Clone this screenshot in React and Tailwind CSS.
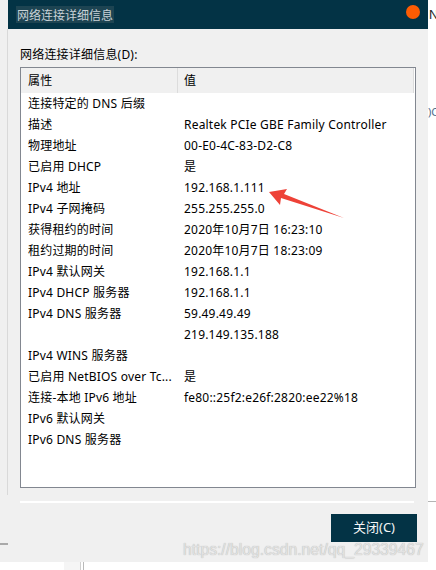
import React from "react";

const rows = [
  ["连接特定的 DNS 后缀", ""],
  ["描述", "Realtek PCIe GBE Family Controller"],
  ["物理地址", "00-E0-4C-83-D2-C8"],
  ["已启用 DHCP", "是"],
  ["IPv4 地址", "192.168.1.111"],
  ["IPv4 子网掩码", "255.255.255.0"],
  ["获得租约的时间", "2020年10月7日 16:23:10"],
  ["租约过期的时间", "2020年10月7日 18:23:09"],
  ["IPv4 默认网关", "192.168.1.1"],
  ["IPv4 DHCP 服务器", "192.168.1.1"],
  ["IPv4 DNS 服务器", "59.49.49.49"],
  ["", "219.149.135.188"],
  ["IPv4 WINS 服务器", ""],
  ["已启用 NetBIOS over Tc...", "是"],
  ["连接-本地 IPv6 地址", "fe80::25f2:e26f:2820:ee22%18"],
  ["IPv6 默认网关", ""],
  ["IPv6 DNS 服务器", ""],
];

const App = () => {
  return (
    <div className="relative w-[436px] h-[570px] overflow-hidden bg-white flex flex-col font-['Noto_Sans','Noto_Sans_CJK_SC',sans-serif] text-black">
      <div className="flex h-[562px]">
        {/* left strip of the window behind */}
        <div className="w-[8px] bg-[#f0f0f0] flex flex-col">
          <div className="h-[29px]" />
          <div className="h-[466px] w-[1px] ml-[7px] bg-[#d9d9d9]" />
          <div className="h-[48px]" />
          <div className="h-[2px] bg-[#a9a9a9]" />
        </div>

        {/* dialog */}
        <div className="w-[420px] flex flex-col bg-[#f0f0f0]">
          <div className="h-[29px] bg-[#033345] flex pl-[8px]">
            <span className="mt-[6px] h-[17px] px-[1px] bg-[#1d4452] text-[#c8d2d7] text-[12px] leading-[17px] font-['Noto_Sans_CJK_SC',sans-serif]">
              网络连接详细信息
            </span>
            <div className="ml-auto mr-[8px] mt-[5px] w-[14px] h-[14px] rounded-full bg-[#fd5c03]" />
          </div>

          <div className="flex-1 pl-[12px] pr-[11px] pt-[18px] flex flex-col">
            <div className="h-[16px] text-[12px] leading-[16px] tracking-[0.2px]">网络连接详细信息(D):</div>

            <div className="mt-[4px] w-[396px] h-[421px] border border-[#828790] bg-white flex flex-col text-[12px] tracking-[0.2px]">
              <div className="h-[25px] flex shrink-0">
                <div className="w-[156px] bg-[#f0f0f0] pl-[7px] flex items-center">属性</div>
                <div className="w-[1px] bg-[#dcdcdc]" />
                <div className="w-[235px] bg-[#f0f0f0] pl-[6px] flex items-center">值</div>
                <div className="w-[1px] bg-[#dcdcdc]" />
              </div>
              {rows.map(([k, v], i) => (
                <div key={i} className="h-[21px] flex items-center shrink-0">
                  <div className="w-[156px] pl-[7px] whitespace-nowrap overflow-hidden">{k}</div>
                  <div className="pl-[7px] whitespace-nowrap">{v}</div>
                </div>
              ))}
            </div>

            <div className="mt-[13px] w-[394px] h-[2px] bg-white" />

            <div className="mt-[11px] flex justify-end">
              <button className="w-[86px] h-[28px] bg-[#033345] text-[#f2f5f6] text-[13px] flex items-center justify-center">
                关闭(C)
              </button>
            </div>
          </div>
        </div>

        {/* right strip of the window behind */}
        <div className="w-[8px] bg-white flex flex-col overflow-hidden">
          <div className="h-[29px] pt-[7px] pl-[1px] text-[13px] leading-[16px] text-[#222] font-['Liberation_Sans',sans-serif]">
            N
          </div>
          <div className="mt-[76px] h-[14px] text-[11px] leading-[14px] text-[#4d6c8c] whitespace-nowrap">)C</div>
          <div className="mt-[382px] h-[1px] bg-[#b4b4b4]" />
        </div>
      </div>

      {/* bottom strip */}
      <div className="h-[8px] flex">
        <div className="w-[64px]" />
        <div className="w-[16px] bg-[#f5f5f5]" />
        <div className="w-[1px] bg-[#cfcfcf]" />
        <div className="w-[2px]" />
        <div className="w-[1px] bg-[#b9b9b9]" />
      </div>

      {/* watermark */}
      <div className="absolute left-[183px] top-[540px] text-[15.7px] leading-[20px] text-[#e2e2e2] font-['Liberation_Sans',sans-serif] whitespace-nowrap [text-shadow:0_0_1px_#a9a9a9] pointer-events-none">
        https://blog.csdn.net/qq_29339467
      </div>

      {/* red annotation arrow */}
      <svg className="absolute left-0 top-0 pointer-events-none" width="436" height="570" viewBox="0 0 436 570">
        <polygon points="269,192 287,189 284,194 344,218 281,198 280,205" fill="#ee4238" />
      </svg>
    </div>
  );
};

export default App;
